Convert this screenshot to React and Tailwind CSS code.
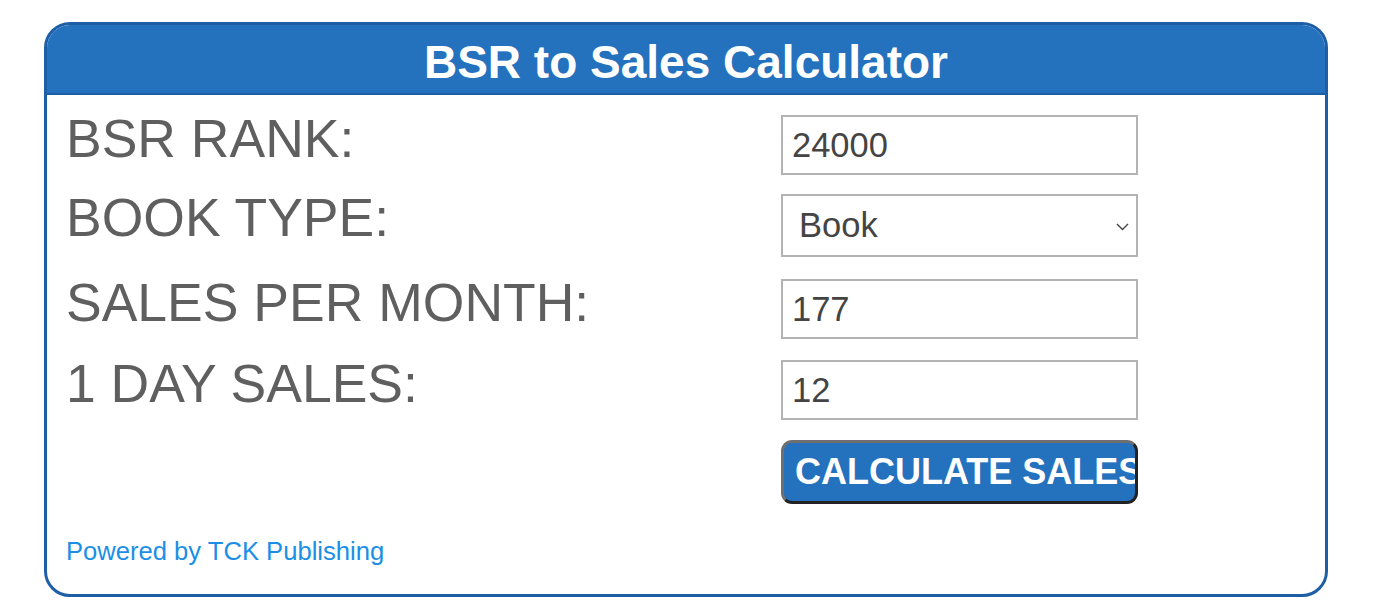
import React from 'react';

const Row = ({ label, children, className = '' }) => (
  <div className={`flex items-start ${className}`}>
    <div className="w-[715px] shrink-0 text-[53.5px] leading-[48px] text-[#5f5f5f]">{label}</div>
    {children}
  </div>
);

const inputCls =
  'w-[357px] h-[60px] border-2 border-[#b3b3b3] bg-white pl-[9px] text-[34.5px] text-[#444] outline-none';

export default function App() {
  return (
    <div className="min-h-screen bg-white pt-[22px] pl-[44px]" style={{ fontFamily: '"Liberation Sans", Arial, sans-serif' }}>
      {/* Calculator card */}
      <div className="w-[1284px] h-[575px] border-[3px] border-[#1d5ea6] rounded-[26px] overflow-hidden flex flex-col">
        <div className="h-[70px] bg-[#2471bd] border-b-2 border-[#1d5ea6] pt-[3px] text-center text-[46px] font-bold text-white">
          BSR to Sales Calculator
        </div>

        <div className="pt-[20px] pl-[19px]">
          <Row label="BSR RANK:">
            <input className={inputCls} defaultValue="24000" readOnly />
          </Row>

          <Row label="BOOK TYPE:" className="mt-[19px]">
            <div className="relative w-[357px] h-[63px] border-2 border-[#b3b3b3] bg-white">
              <div className="h-full flex items-center pl-[16px] text-[34.5px] text-[#444]">Book</div>
              <svg className="absolute right-[7px] top-[27px]" width="13" height="8" viewBox="0 0 13 8">
                <path d="M1 1l5.5 5.5L12 1" fill="none" stroke="#444" strokeWidth="1.4" />
              </svg>
            </div>
          </Row>

          <Row label="SALES PER MONTH:" className="mt-[22px]">
            <input className={inputCls} defaultValue="177" readOnly />
          </Row>

          <Row label="1 DAY SALES:" className="mt-[21px]">
            <input className={inputCls} defaultValue="12" readOnly />
          </Row>

          <div className="mt-[20px] pl-[715px]">
            <button
              className="w-[357px] h-[64px] rounded-[11px] bg-[#2471bd] border-[3px] border-t-[#6f6f6f] border-l-[#6f6f6f] border-b-[#222] border-r-[#222] pl-[11px] text-left text-[36px] font-bold text-white whitespace-nowrap overflow-hidden"
            >
              CALCULATE SALES
            </button>
          </div>

          <div className="mt-[28px] text-[25.6px] text-[#1b8fe6]">Powered by TCK Publishing</div>
        </div>
      </div>
    </div>
  );
}
